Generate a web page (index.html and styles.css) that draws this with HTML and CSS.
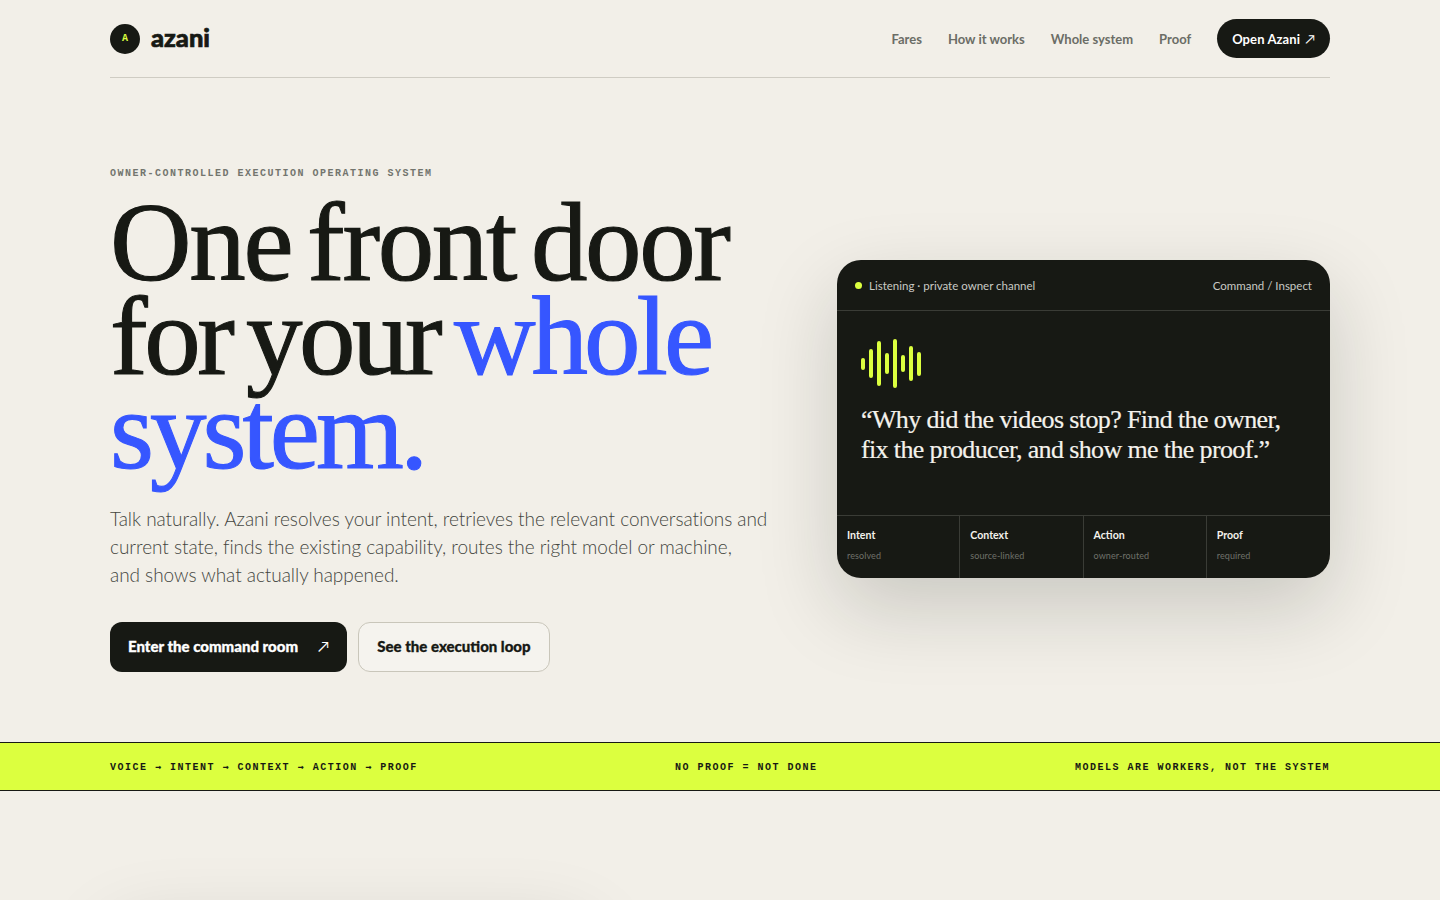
FILE: index.html
```html
<!DOCTYPE html>
<html lang="en">
<head>
  <meta charset="UTF-8">
  <meta name="viewport" content="width=device-width, initial-scale=1.0">
  <title>Azani</title>
  <link rel="stylesheet" href="styles.css">
</head>
<body>
  <header class="topbar">
    <a class="brand" href="#">
      <span class="brand-mark">A</span>
      <span class="brand-name">azani</span>
    </a>
    <nav class="nav">
      <a href="#">Fares</a>
      <a href="#">How it works</a>
      <a href="#">Whole system</a>
      <a href="#">Proof</a>
      <a class="nav-cta" href="#">Open Azani <span class="arrow">↗</span></a>
    </nav>
  </header>

  <main class="hero">
    <div class="hero-copy">
      <p class="eyebrow">OWNER-CONTROLLED EXECUTION OPERATING SYSTEM</p>
      <h1><span class="first-line">One front door</span><br>for your <em>whole system.</em></h1>
      <p class="lede">Talk naturally. Azani resolves your intent, retrieves the relevant conversations and<br>current state, finds the existing capability, routes the right model or machine,<br>and shows what actually happened.</p>
      <div class="actions">
        <a class="button button-dark" href="#">Enter the command room <span class="arrow">↗</span></a>
        <a class="button button-light" href="#">See the execution loop</a>
      </div>
    </div>

    <section class="console">
      <div class="console-top">
        <span class="status"><i class="dot"></i>Listening · private owner channel</span>
        <span>Command / Inspect</span>
      </div>
      <div class="console-body">
        <svg class="wave" width="60" height="49" viewBox="0 0 60 49" fill="none" stroke="#dcff3f" stroke-width="4" stroke-linecap="round">
          <path d="M2 21v8M10 12v25M18 4v41M26 16v17M34 2v45M42 18v13M50 9v31M58 15v20"/>
        </svg>
        <p class="quote">“Why did the videos stop? Find the owner, fix the producer, and show me the proof.”</p>
      </div>
      <div class="steps">
        <div class="step"><b>Intent</b><span>resolved</span></div>
        <div class="step"><b>Context</b><span>source-linked</span></div>
        <div class="step"><b>Action</b><span>owner-routed</span></div>
        <div class="step"><b>Proof</b><span>required</span></div>
      </div>
    </section>
  </main>

  <div class="ticker">
    <span>VOICE <i>→</i> INTENT <i>→</i> CONTEXT <i>→</i> ACTION <i>→</i> PROOF</span>
    <span>NO PROOF = NOT DONE</span>
    <span>MODELS ARE WORKERS, NOT THE SYSTEM</span>
  </div>

  <section class="next">
    <div class="next-card"></div>
  </section>
</body>
</html>
```

FILE: styles.css
```css
html, body {
  height: 900px;
  overflow: hidden;
}
body {
  margin: 0;
  background-color: #f2efe8;
  color: #171914;
  font-family: 'Lato', sans-serif;
}
a {
  color: inherit;
  text-decoration: none;
}
.topbar {
  margin: 0 110px;
  height: 77px;
  border-bottom: 1px solid #cfccc3;
  display: flex;
  justify-content: space-between;
  align-items: center;
}
.brand {
  display: flex;
  align-items: center;
  gap: 11px;
}
.brand-mark {
  width: 30px;
  height: 30px;
  border-radius: 50%;
  background-color: #171914;
  color: #dcff3f;
  font-family: 'Liberation Mono', monospace;
  font-size: 10px;
  font-weight: 700;
  display: flex;
  align-items: center;
  justify-content: center;
}
.brand-name {
  font-size: 25.5px;
  font-weight: 900;
  padding-bottom: 4px;
  -webkit-text-stroke: 0.7px #171914;
}
.nav {
  display: flex;
  align-items: center;
  gap: 26px;
  font-size: 13px;
  font-weight: 700;
  color: #6b6d66;
}
.nav-cta {
  background-color: #171914;
  color: #fff;
  height: 39px;
  padding: 0 15px;
  border-radius: 20px;
  display: flex;
  align-items: center;
  gap: 5px;
  letter-spacing: 0.1px;
}
.arrow {
  font-weight: 400;
}
.hero {
  margin: 0 110px;
  height: 664px;
  box-sizing: border-box;
  padding: 90px 0 70px;
  display: grid;
  grid-template-columns: 1fr 493px;
  gap: 60px;
  align-items: center;
}
.eyebrow {
  margin: 0;
  font-family: 'Liberation Mono', monospace;
  font-size: 10px;
  font-weight: 700;
  letter-spacing: 1.5px;
  color: #73756e;
}
h1 {
  margin: 16px 0 0;
  font-family: 'Liberation Serif', serif;
  font-size: 113px;
  line-height: 94px;
  font-weight: 400;
  letter-spacing: -3.5px;
  word-spacing: -10px;
  -webkit-text-stroke: 1.1px currentColor;
}
.first-line {
  letter-spacing: -2.35px;
}
h1 em {
  font-style: normal;
  letter-spacing: -4px;
  color: #3656ff;
}
.lede {
  margin: 28px 0 0;
  font-size: 19px;
  font-weight: 300;
  line-height: 28px;
  letter-spacing: -0.04px;
  color: #44463f;
  white-space: nowrap;
}
.actions {
  display: flex;
  gap: 11px;
  margin-top: 33px;
}
.button {
  height: 50px;
  box-sizing: border-box;
  padding: 0 18px 2px;
  border-radius: 12px;
  display: flex;
  align-items: center;
  font-size: 15px;
  font-weight: 900;
  -webkit-text-stroke: 0.3px currentColor;
}
.button .arrow {
  -webkit-text-stroke: 0;
}
.button-dark {
  background-color: #171914;
  color: #fff;
  gap: 20px;
}
.button-light {
  border: 1px solid #c9c6ba;
  background-color: #f5f3ee;
}
.console {
  margin-bottom: 2px;
  background-color: #171914;
  color: #c9cac4;
  border-radius: 24px;
  box-shadow: 0 30px 80px rgba(23, 25, 20, 0.18);
  overflow: hidden;
}
.console-top {
  height: 50px;
  padding: 0 18px;
  border-bottom: 1px solid #3a3c36;
  display: flex;
  justify-content: space-between;
  align-items: center;
  font-size: 11.5px;
}
.status {
  display: flex;
  align-items: center;
  gap: 7px;
}
.dot {
  width: 7px;
  height: 7px;
  border-radius: 50%;
  background-color: #dcff3f;
}
.console-body {
  padding: 28px 24px 0;
  height: 176px;
}
.wave {
  display: block;
}
.quote {
  margin: 17px 0 0;
  font-family: 'Liberation Serif', serif;
  font-size: 26px;
  line-height: 30px;
  letter-spacing: -0.63px;
  color: #f4f2ec;
  -webkit-text-stroke: 0.2px currentColor;
}
.steps {
  display: grid;
  grid-template-columns: repeat(4, 1fr);
  border-top: 1px solid #3a3c36;
  height: 62px;
}
.step {
  padding: 13px 10px 0;
  border-right: 1px solid #3a3c36;
  display: flex;
  flex-direction: column;
  gap: 9px;
}
.step:last-child {
  border-right: none;
}
.step b {
  font-size: 10.6px;
  color: #f4f2ec;
}
.step span {
  font-size: 9px;
  letter-spacing: 0.1px;
  color: #6f716a;
}
.ticker {
  height: 46px;
  padding: 1px 110px 0;
  background-color: #dcff3f;
  border-top: 1px solid #171914;
  border-bottom: 1px solid #171914;
  display: flex;
  justify-content: space-between;
  align-items: center;
  font-family: 'Liberation Mono', monospace;
  font-size: 10px;
  font-weight: 700;
  letter-spacing: 1.5px;
}
.ticker i {
  font-family: 'DejaVu Sans Mono', monospace;
  font-style: normal;
}
.next {
  padding: 109px 110px 0;
}
.next-card {
  width: 480px;
  height: 200px;
  border-radius: 24px;
  box-shadow: 0 30px 80px rgba(23, 25, 20, 0.14);
}
```
